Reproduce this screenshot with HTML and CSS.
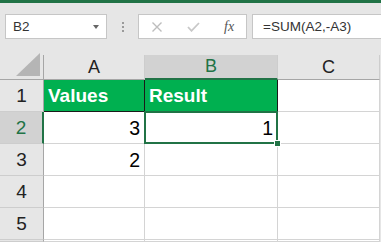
FILE: index.html
```html
<!DOCTYPE html>
<html lang="en">
<head>
    <meta charset="UTF-8">
    <title>Sheet</title>
    <link rel="stylesheet" href="styles.css">
</head>
<body>
    <div class="ribbon-edge"></div>

    <div class="formula-row">
        <div class="name-box">
            <span>B2</span>
            <span class="caret"></span>
        </div>
        <div class="grip"><i></i><i></i><i></i></div>
        <div class="actions">
            <svg class="icon" width="12" height="10" viewBox="0 0 12 10">
                <path d="M1.5 0.5 L10.5 9.5 M10.5 0.5 L1.5 9.5" stroke="#bdbdbd" stroke-width="1.4" fill="none"/>
            </svg>
            <svg class="icon" width="13" height="10" viewBox="0 0 13 10">
                <path d="M1 5 L4.5 8.8 L12 1" stroke="#c8c8c8" stroke-width="1.8" fill="none"/>
            </svg>
            <span class="fx">fx</span>
        </div>
        <div class="formula">=SUM(A2,-A3)</div>
    </div>

    <div class="sheet">
        <div class="corner">
            <svg width="24" height="23" viewBox="0 0 24 23">
                <polygon points="24,0 24,23 0,23" fill="#b5b5b5"/>
            </svg>
        </div>
        <div class="col-head">A</div>
        <div class="col-head selected">B</div>
        <div class="col-head">C</div>

        <div class="row-head">1</div>
        <div class="cell head dark-right dark-bottom">Values</div>
        <div class="cell head dark-right">Result</div>
        <div class="cell"></div>

        <div class="row-head selected">2</div>
        <div class="cell num">3</div>
        <div class="cell num active">1<div class="selection"><span class="handle"></span></div></div>
        <div class="cell"></div>

        <div class="row-head">3</div>
        <div class="cell num">2</div>
        <div class="cell"></div>
        <div class="cell"></div>

        <div class="row-head">4</div>
        <div class="cell"></div>
        <div class="cell"></div>
        <div class="cell"></div>

        <div class="row-head">5</div>
        <div class="cell"></div>
        <div class="cell"></div>
        <div class="cell"></div>

        <div class="row-head"></div>
        <div class="cell"></div>
        <div class="cell"></div>
        <div class="cell"></div>
    </div>
</body>
</html>
```

FILE: styles.css
```css
* {
    margin: 0;
    padding: 0;
    box-sizing: border-box;
}

body {
    width: 381px;
    height: 242px;
    overflow: hidden;
    background: #e6e6e6;
    font-family: "Liberation Sans", Arial, sans-serif;
}

.ribbon-edge {
    height: 3px;
    background: #217346;
}

.formula-row {
    display: flex;
    align-items: center;
    height: 25px;
    margin-top: 11px;
    margin-bottom: 16px;
    font-size: 13.5px;
    color: #333;
}

.name-box {
    display: flex;
    align-items: center;
    justify-content: space-between;
    width: 102px;
    height: 25px;
    margin-left: 5px;
    padding: 0 7px 0 7px;
    background: #fff;
    border: 1px solid #c6c6c6;
}

.caret {
    width: 0;
    height: 0;
    border-left: 3px solid transparent;
    border-right: 3px solid transparent;
    border-top: 4px solid #666;
}

.grip {
    display: flex;
    flex-direction: column;
    gap: 2px;
    width: 31px;
    align-items: center;
}

.grip i {
    width: 2px;
    height: 2px;
    background: #9a9a9a;
}

.actions {
    display: flex;
    align-items: center;
    width: 109px;
    height: 25px;
    padding-left: 12px;
    background: #fff;
    border: 1px solid #c6c6c6;
}

.actions .icon:first-child {
    margin-right: 24px;
}

.fx {
    margin-left: 24px;
    font-family: "Liberation Serif", serif;
    font-style: italic;
    font-size: 14px;
    color: #555;
}

.formula {
    flex: 1;
    height: 25px;
    margin-left: 5px;
    padding-left: 10px;
    line-height: 23px;
    background: #fff;
    border: 1px solid #c6c6c6;
    border-right: none;
}

.sheet {
    display: grid;
    grid-template-columns: 44px 101px 133px 102px;
    grid-template-rows: 25px repeat(5, 32px) 2px;
}

.corner {
    display: flex;
    justify-content: flex-end;
    align-items: flex-end;
    padding: 0 3px 3px 0;
    border-right: 1px solid #a6a6a6;
    border-bottom: 1px solid #a6a6a6;
}

.corner svg {
    display: block;
}

.col-head {
    display: flex;
    justify-content: center;
    align-items: center;
    font-size: 18px;
    color: #222;
    border-right: 1px solid #cdcdcd;
    border-bottom: 1px solid #a6a6a6;
}

.col-head.selected {
    background: #d2d2d2;
    color: #217346;
    border-bottom: 2px solid #217346;
}

.row-head {
    display: flex;
    justify-content: center;
    align-items: center;
    font-size: 19px;
    color: #222;
    border-right: 1px solid #a6a6a6;
    border-bottom: 1px solid #cdcdcd;
}

.row-head.selected {
    background: #d2d2d2;
    color: #217346;
    border-right: 2px solid #217346;
}

.cell {
    display: flex;
    align-items: center;
    padding: 0 4px;
    font-size: 19.5px;
    color: #000;
    background: #fff;
    border-right: 1px solid #d4d4d4;
    border-bottom: 1px solid #d4d4d4;
}

.cell.head {
    background: #00b050;
    color: #fff;
    font-weight: bold;
    font-size: 19px;
}

.cell.num {
    justify-content: flex-end;
    padding-top: 2px;
}

.cell.dark-right {
    border-right-color: #1a1a1a;
}

.cell.dark-bottom {
    border-bottom-color: #1a1a1a;
}

.cell.active {
    position: relative;
}

.selection {
    position: absolute;
    top: -1px;
    left: -1px;
    right: -1px;
    bottom: -1px;
    border: 2px solid #217346;
}

.handle {
    position: absolute;
    right: -5px;
    bottom: -5px;
    width: 7px;
    height: 7px;
    background: #217346;
    border: 1px solid #fff;
}
```
